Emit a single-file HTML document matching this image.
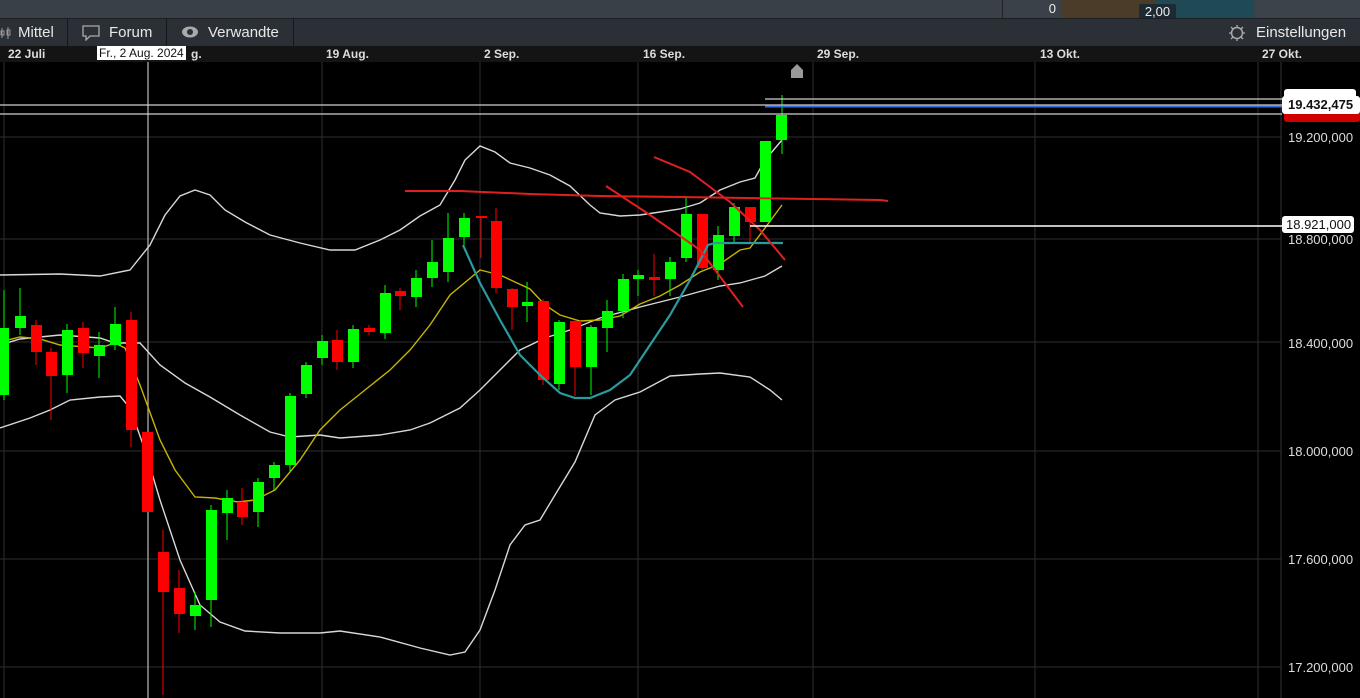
<!DOCTYPE html>
<html><head><meta charset="utf-8"><style>
*{margin:0;padding:0;box-sizing:border-box}
body{width:1360px;height:698px;overflow:hidden;background:#000;font-family:"Liberation Sans",sans-serif;position:relative}
.top{position:absolute;left:0;top:0;width:1360px;height:18px;background:#3a4047}
.tb{position:absolute;left:0;top:18px;width:1360px;height:28px;background:#2b3036;border-top:1px solid #1b1e22;color:#e8e8e8;font-size:15px}
.tab{position:absolute;top:0;height:27px;border-right:1px solid #15181b;line-height:27px}
.ax{position:absolute;left:0;top:46px;width:1360px;height:16px;background:#141414;color:#ddd;font-size:12px;font-weight:bold}
.ax span{position:absolute;top:1px}
.pl{position:absolute;left:1288px;color:#ddd;font-size:13px}
</style></head><body>
<div class="top">
 <div style="position:absolute;left:1002px;top:0;width:58px;height:18px;background:#3a4149;border-left:1px solid #222;color:#eee;font-size:13px;text-align:right;padding-right:4px;line-height:17px">0</div>
 <div style="position:absolute;left:1061px;top:0;width:95px;height:18px;background:#4a3c28"></div>
 <div style="position:absolute;left:1156px;top:0;width:97px;height:18px;background:#1f4a55"></div>
 <div style="position:absolute;left:1139px;top:4px;width:37px;height:15px;background:#1e2a33;color:#eee;font-size:13px;text-align:center;line-height:15px;border-radius:2px">2,00</div>
 <div style="position:absolute;left:1255px;top:0;width:105px;height:18px;background:#3d434a"></div>
</div>
<div class="tb">
 <div class="tab" style="left:0;width:68px"><svg style="position:absolute;left:0;top:7px" width="12" height="14"><path d="M2 2v10M1 5h3v4H1zM8 1v12M7 4h3v5H7z" stroke="#999" fill="none"/></svg><span style="position:absolute;left:18px">Mittel</span></div>
 <div class="tab" style="left:68px;width:99px"><svg style="position:absolute;left:14px;top:6px" width="18" height="16"><path d="M1 1h16v10H8l-4 4v-4H1z" fill="none" stroke="#aaa" stroke-width="1.3"/></svg><span style="position:absolute;left:41px">Forum</span></div>
 <div class="tab" style="left:167px;width:127px"><svg style="position:absolute;left:14px;top:7px" width="18" height="12"><ellipse cx="9" cy="6" rx="8" ry="5.5" fill="#aaa"/><circle cx="9" cy="6" r="3" fill="#2b3036"/></svg><span style="position:absolute;left:41px">Verwandte</span></div>
 <svg style="position:absolute;left:1228px;top:5px" width="18" height="18"><circle cx="9" cy="9" r="5.5" fill="none" stroke="#aaa" stroke-width="1.5"/><path d="M9 1v3M9 14v3M1 9h3M14 9h3M3 3l2 2M13 13l2 2M3 15l2-2M13 5l2-2" stroke="#aaa" stroke-width="1.3"/></svg>
 <span style="position:absolute;left:1256px;top:0;line-height:27px">Einstellungen</span>
</div>
<div class="ax">
 <span style="left:8px">22 Juli</span>
 <span style="left:191px">g.</span>
 <span style="left:326px">19 Aug.</span>
 <span style="left:484px">2 Sep.</span>
 <span style="left:643px">16 Sep.</span>
 <span style="left:817px">29 Sep.</span>
 <span style="left:1040px">13 Okt.</span>
 <span style="left:1262px">27 Okt.</span>
 <span style="left:97px;top:0;background:#fff;color:#111;padding:0 2px;font-weight:normal;font-size:12px;line-height:14px">Fr., 2 Aug. 2024</span>
</div>
<svg style="position:absolute;left:0;top:62px" width="1360" height="636" viewBox="0 62 1360 636">
<g stroke="#2e2e2e" stroke-width="1">
<path d="M4 62V698M322 62V698M480 62V698M638 62V698M813 62V698M1035 62V698M1258 62V698"/>
<path d="M0 137H1281M0 239H1281M0 342H1281M0 451H1281M0 559H1281M0 667H1281"/>
</g>
<path d="M148 46V698" stroke="#bbb" stroke-width="1.2"/>
<path d="M1281 62V698" stroke="#333"/>
<path d="M791 78V70l6-6 6 6v8z" fill="#999"/>
<g stroke="#d8d8d8" fill="none" stroke-width="1.4">
<polyline points="0,275 60,274 100,276 130,270 150,245 165,215 180,196 195,190 210,195 225,210 245,222 270,235 300,243 330,250 355,250 380,240 400,230 420,216 440,205 455,180 465,160 480,146 495,152 510,163 530,168 550,175 570,186 590,205 600,213 620,216 640,215 660,212 680,209 700,203 720,190 740,182 755,178 765,160 782,140"/>
<polyline points="0,345 20,339 60,335 100,338 115,343 140,343 160,365 185,383 210,397 240,415 270,432 290,437 320,435 340,438 380,435 410,430 430,423 460,408 480,390 500,370 520,350 545,338 570,330 600,318 640,307 680,297 720,286 740,283 765,276 782,266"/>
<polyline points="0,428 30,418 50,410 70,400 100,397 120,396 130,408 145,450 160,500 180,560 200,605 220,622 245,631 280,633 320,633 340,631 380,637 420,648 450,655 465,652 480,630 495,590 510,545 525,525 540,520 555,495 575,462 595,415 615,400 640,392 670,376 700,374 720,373 750,377 770,390 782,400"/>
</g>
<polyline fill="none" stroke="#c8b400" stroke-width="1.4" points="0,342 20,337 40,339 60,345 100,348 115,343 125,348 140,385 160,440 175,470 195,497 215,498 238,502 255,500 275,490 300,460 320,430 340,410 365,390 390,370 410,350 430,325 450,295 480,270 500,275 530,289 545,305 560,315 580,321 600,320 620,316 640,304 660,296 680,285 700,272 720,264 740,250 750,248 765,228 782,205"/>
<g stroke-width="1">
<path d="M20 288V335M51 348V420M67 324V393M83 322V368M99 332V378M115 307V350M131 312V447M163 530V695M179 570V633M195 592V630M211 505V627M227 490V540M242 488V525M258 478V527M274 462V490M290 393V472M306 362V398M322 335V365M337 330V370M353 325V368M369 325V335M385 285V339M400 288V310M416 270V307M432 240V287M448 213V282M464 213V245M481 217V258M496 208V293M512 288V330M527 282V322M543 299V385M559 320V390M575 320V396M591 325V395M607 300V352M623 274V318M638 270V296M654 254V296M670 257V296M686 196V262M702 214V270M718 226V280M734 203V243M750 207V243M782 95V154M4 290V400M36 320V365" stroke="#f00"/>
<path d="M4 290V400M20 288V335M67 324V393M99 332V378M115 307V350M195 592V630M211 505V627M227 490V540M258 478V527M274 462V490M290 393V472M306 362V398M322 335V365M353 325V368M385 285V339M416 270V307M432 240V287M448 213V282M464 213V245M527 282V322M559 320V390M591 325V395M607 300V352M623 274V318M638 270V296M670 257V296M686 196V262M718 226V280M734 203V243M782 95V154" stroke="#0f0"/>
</g>
<g fill="#00ff00">
<rect x="-2" y="328" width="11" height="67"/><rect x="15" y="316" width="11" height="12"/><rect x="62" y="330" width="11" height="45"/><rect x="94" y="345" width="11" height="11"/><rect x="110" y="324" width="11" height="21"/><rect x="190" y="605" width="11" height="11"/><rect x="206" y="510" width="11" height="90"/><rect x="222" y="498" width="11" height="15"/><rect x="253" y="482" width="11" height="30"/><rect x="269" y="465" width="11" height="13"/><rect x="285" y="396" width="11" height="69"/><rect x="301" y="365" width="11" height="29"/><rect x="317" y="341" width="11" height="17"/><rect x="348" y="329" width="11" height="33"/><rect x="380" y="293" width="11" height="40"/><rect x="411" y="278" width="11" height="19"/><rect x="427" y="262" width="11" height="16"/><rect x="443" y="238" width="11" height="34"/><rect x="459" y="218" width="11" height="19"/><rect x="522" y="302" width="11" height="4"/><rect x="554" y="322" width="11" height="62"/><rect x="586" y="327" width="11" height="40"/><rect x="602" y="311" width="11" height="17"/><rect x="618" y="279" width="11" height="32"/><rect x="633" y="275" width="11" height="4"/><rect x="665" y="262" width="11" height="17"/><rect x="681" y="214" width="11" height="44"/><rect x="713" y="235" width="11" height="35"/><rect x="729" y="207" width="11" height="29"/><rect x="760" y="141" width="11" height="81"/><rect x="776" y="115" width="11" height="25"/>
</g>
<g fill="#ff0000">
<rect x="31" y="325" width="11" height="27"/><rect x="46" y="352" width="11" height="24"/><rect x="78" y="328" width="11" height="25"/><rect x="126" y="320" width="11" height="110"/><rect x="142" y="432" width="11" height="80"/><rect x="158" y="552" width="11" height="40"/><rect x="174" y="588" width="11" height="26"/><rect x="237" y="502" width="11" height="15"/><rect x="332" y="340" width="11" height="22"/><rect x="364" y="328" width="11" height="4"/><rect x="395" y="291" width="11" height="5"/><rect x="476" y="216" width="11" height="2"/><rect x="491" y="221" width="11" height="67"/><rect x="507" y="289" width="11" height="18"/><rect x="538" y="301" width="11" height="79"/><rect x="570" y="321" width="11" height="46"/><rect x="649" y="277" width="11" height="3"/><rect x="697" y="214" width="11" height="54"/><rect x="745" y="207" width="11" height="15"/>
</g>
<polyline fill="none" stroke="#2a9a9e" stroke-width="2.2" points="463,245 480,283 500,320 520,355 540,375 560,393 575,398 590,398 610,390 630,375 650,345 670,315 690,280 708,245 715,243 783,243"/>
<g fill="none" stroke="#e02020" stroke-width="2">
<polyline points="405,191 460,191 530,194 600,196 680,197 880,200 888,201"/>
<polyline points="606,186 650,215 700,250 743,307"/>
<polyline points="654,157 690,172 730,202 760,230 785,260"/>
</g>
<path d="M0 105H1282M0 114H1282M765 99H1282" stroke="#cfcfcf" stroke-width="1.3"/>
<path d="M765 106.5H1282" stroke="#3a6ee0" stroke-width="2"/>
<path d="M750 226H1284" stroke="#fff" stroke-width="1.5"/>
</svg>
<div style="position:absolute;left:1284px;top:89px;width:72px;height:10px;background:#fff;border-radius:3px 3px 0 0"></div>
<div style="position:absolute;left:1284px;top:108px;width:76px;height:14px;background:#d00000;border-radius:0 0 3px 3px"></div>
<div style="position:absolute;left:1282px;top:96px;width:78px;height:18px;background:#fff;color:#111;font-size:13px;font-weight:bold;line-height:18px;padding-left:6px;border-radius:3px">19.432,475</div>
<div style="position:absolute;left:1282px;top:216px;width:72px;height:17px;background:#fff;color:#111;font-size:13px;line-height:17px;padding-left:4px;border-radius:3px">18.921,000</div>
<div class="pl" style="top:130px">19.200,000</div>
<div class="pl" style="top:232px">18.800,000</div>
<div class="pl" style="top:336px">18.400,000</div>
<div class="pl" style="top:444px">18.000,000</div>
<div class="pl" style="top:552px">17.600,000</div>
<div class="pl" style="top:660px">17.200,000</div>
</body></html>
